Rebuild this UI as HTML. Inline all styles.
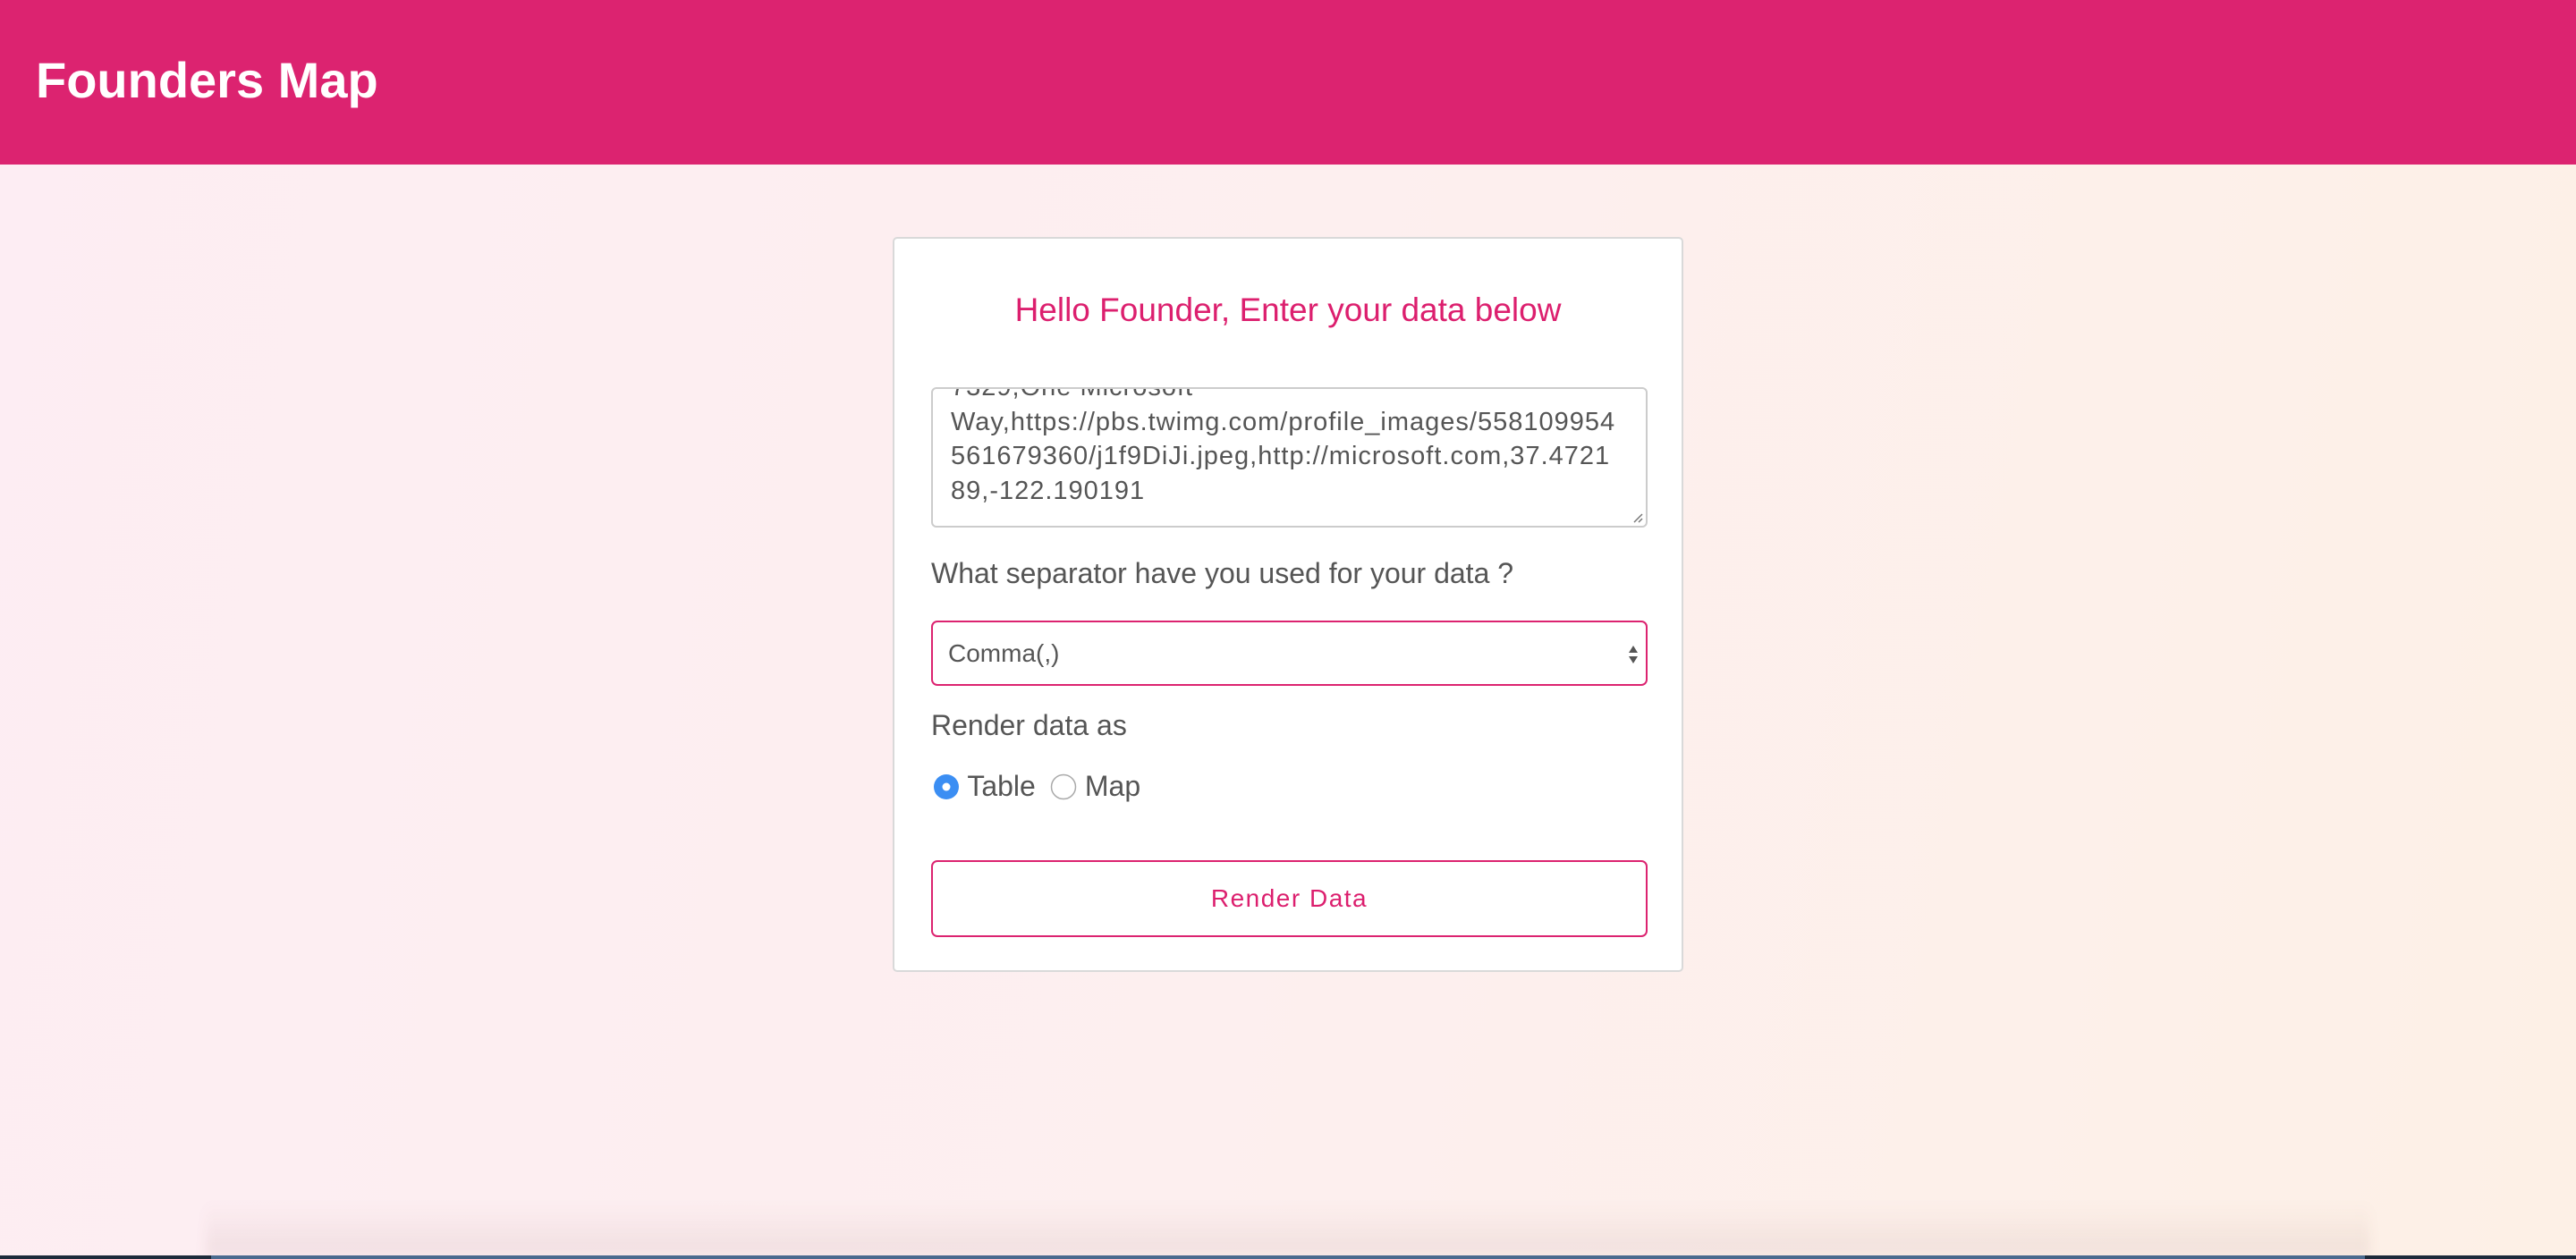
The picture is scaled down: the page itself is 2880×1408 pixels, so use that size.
<!DOCTYPE html>
<html><head><meta charset="utf-8"><style>
*{box-sizing:border-box;margin:0;padding:0}
body{width:2880px;height:1408px;overflow:hidden;font-family:"Liberation Sans",Arial,sans-serif;background:linear-gradient(100deg,#fdedf3 0%,#fdefef 50%,#fdf0e6 100%);position:relative}
.hdr{position:absolute;left:0;top:0;width:2880px;height:184px;background:#dc2370}
.hdr h1{position:absolute;left:40px;top:57px;font-size:56px;font-weight:bold;color:#fff;line-height:66px}
.card{position:absolute;left:998px;top:265px;width:884px;height:822px;background:#fff;border:2px solid #d9d9d9;border-radius:5px}
.t{position:absolute;left:0;width:100%;top:58px;text-align:center;color:#dc1f6e;font-size:37px;line-height:44px}
.ta{position:absolute;left:41px;top:166px;width:801px;height:157px;border:2px solid #ccc;border-radius:6px;overflow:hidden;font-size:29px;letter-spacing:1px;line-height:38.5px;color:#555;padding:0 20px;white-space:nowrap}
.ta div{margin-top:-21px}
.lab{position:absolute;left:41px;font-size:32px;color:#555}
.sel{position:absolute;left:41px;top:427px;width:801px;height:73px;border:2px solid #dc2370;border-radius:7px;font-size:28px;color:#555;padding-left:17px;line-height:69px}
.arr{position:absolute;right:8px;top:23px;width:12px;height:26px}
.radio{position:absolute;top:594px;font-size:32px;color:#555}
.btn{position:absolute;left:41px;top:695px;width:801px;height:86px;border:2px solid #dc2370;border-radius:7px;text-align:center;line-height:82px;font-size:28px;color:#dc1f6e;letter-spacing:1.5px}
.shadow{position:absolute;left:230px;right:230px;bottom:4px;height:60px;background:linear-gradient(to bottom,rgba(0,0,0,0),rgba(80,40,30,0.07));filter:blur(6px)}
.bar{position:absolute;left:0;right:0;bottom:0;height:4px;background:#1c2a3a}
.bar2{position:absolute;left:236px;right:236px;bottom:0;height:4px;background:#4a6a8e}
</style></head><body>
<div class="hdr"><h1>Founders Map</h1></div>
<div class="card">
<div class="t">Hello Founder, Enter your data below</div>
<div class="ta"><div>7329,One Microsoft<br>Way,https://pbs.twimg.com/profile_images/558109954<br>561679360/j1f9DiJi.jpeg,http://microsoft.com,37.4721<br>89,-122.190191</div>
<svg style="position:absolute;right:3px;bottom:3px" width="12" height="12"><path d="M2 11L11 2M7 11L11 7" stroke="#777" stroke-width="1.5"/></svg></div>
<div class="lab" style="top:356px">What separator have you used for your data ?</div>
<div class="sel">Comma(,)<svg class="arr" viewBox="0 0 12 26"><path d="M6 3L11 11H1Z M6 23L11 15H1Z" fill="#555"/></svg></div>
<div class="lab" style="top:526px">Render data as</div>
<div class="radio" style="left:43px"><svg width="30" height="30" style="vertical-align:-5px"><circle cx="15" cy="15" r="14" fill="#3b8ef3"/><circle cx="15" cy="15" r="4.5" fill="#fff"/></svg> Table</div>
<div class="radio" style="left:174px"><svg width="30" height="30" style="vertical-align:-5px"><circle cx="15" cy="15" r="13.5" fill="#fff" stroke="#aaa" stroke-width="1.5"/></svg> Map</div>
<div class="btn">Render Data</div>
</div>
<div class="shadow"></div>
<div class="bar"></div><div class="bar2"></div>
</body></html>
